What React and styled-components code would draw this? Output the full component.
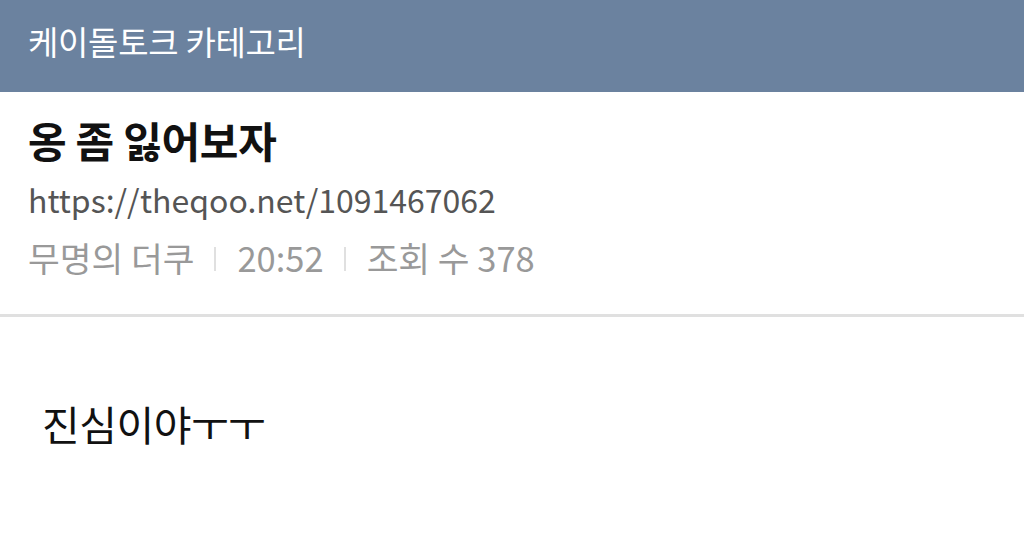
import React from 'react';
import styled, { createGlobalStyle } from 'styled-components';

const GlobalStyle = createGlobalStyle`
	html, body {
		margin: 0;
		padding: 0;
		background: #fff;
		font-family: "Noto Sans CJK KR", "Noto Sans", sans-serif;
	}
`

const StyledPage = styled.div`
	width: 1024px;
	height: 540px;
	overflow: hidden;
	background: #fff;
`

const StyledHeader = styled.div`
	height: 92px;
	background-color: #6b829f;
	display: flex;
	align-items: center;
	padding: 0 0 10px 28px;
	box-sizing: border-box;
	color: #fff;
	font-size: 33px;
	letter-spacing: -0.3px;
`

const StyledInfo = styled.div`
	padding: 18px 28px 0;
	height: 225px;
	box-sizing: border-box;
	border-bottom: 3px solid #e0e0e0;
`

const StyledTitle = styled.h1`
	margin: 0;
	font-size: 42px;
	font-weight: 700;
	line-height: 60px;
	color: #111;
	letter-spacing: -0.3px;
`

const StyledUrl = styled.div`
	font-size: 32px;
	line-height: 58px;
	color: #555;
`

const StyledMeta = styled.div`
	display: flex;
	align-items: center;
	font-size: 34.5px;
	line-height: 58px;
	color: #999;
`

const StyledBar = styled.span`
	display: inline-block;
	width: 2px;
	height: 24px;
	background: #e0e0e0;
	margin: 4px 21px 0 20px;
`

const StyledBody = styled.div`
	padding: 76px 42px;
	font-size: 41px;
	color: #111;
	letter-spacing: -0.5px;
`

const App = () => {
	return (
		<StyledPage>
			<GlobalStyle />
			<StyledHeader>케이돌토크 카테고리</StyledHeader>
			<StyledInfo>
				<StyledTitle>옹 좀 잃어보자</StyledTitle>
				<StyledUrl>https://theqoo.net/1091467062</StyledUrl>
				<StyledMeta>
					<span>무명의 더쿠</span>
					<StyledBar />
					<span>20:52</span>
					<StyledBar />
					<span>조회 수 378</span>
				</StyledMeta>
			</StyledInfo>
			<StyledBody>진심이야ㅜㅜ</StyledBody>
		</StyledPage>
	);
};

export default App;
